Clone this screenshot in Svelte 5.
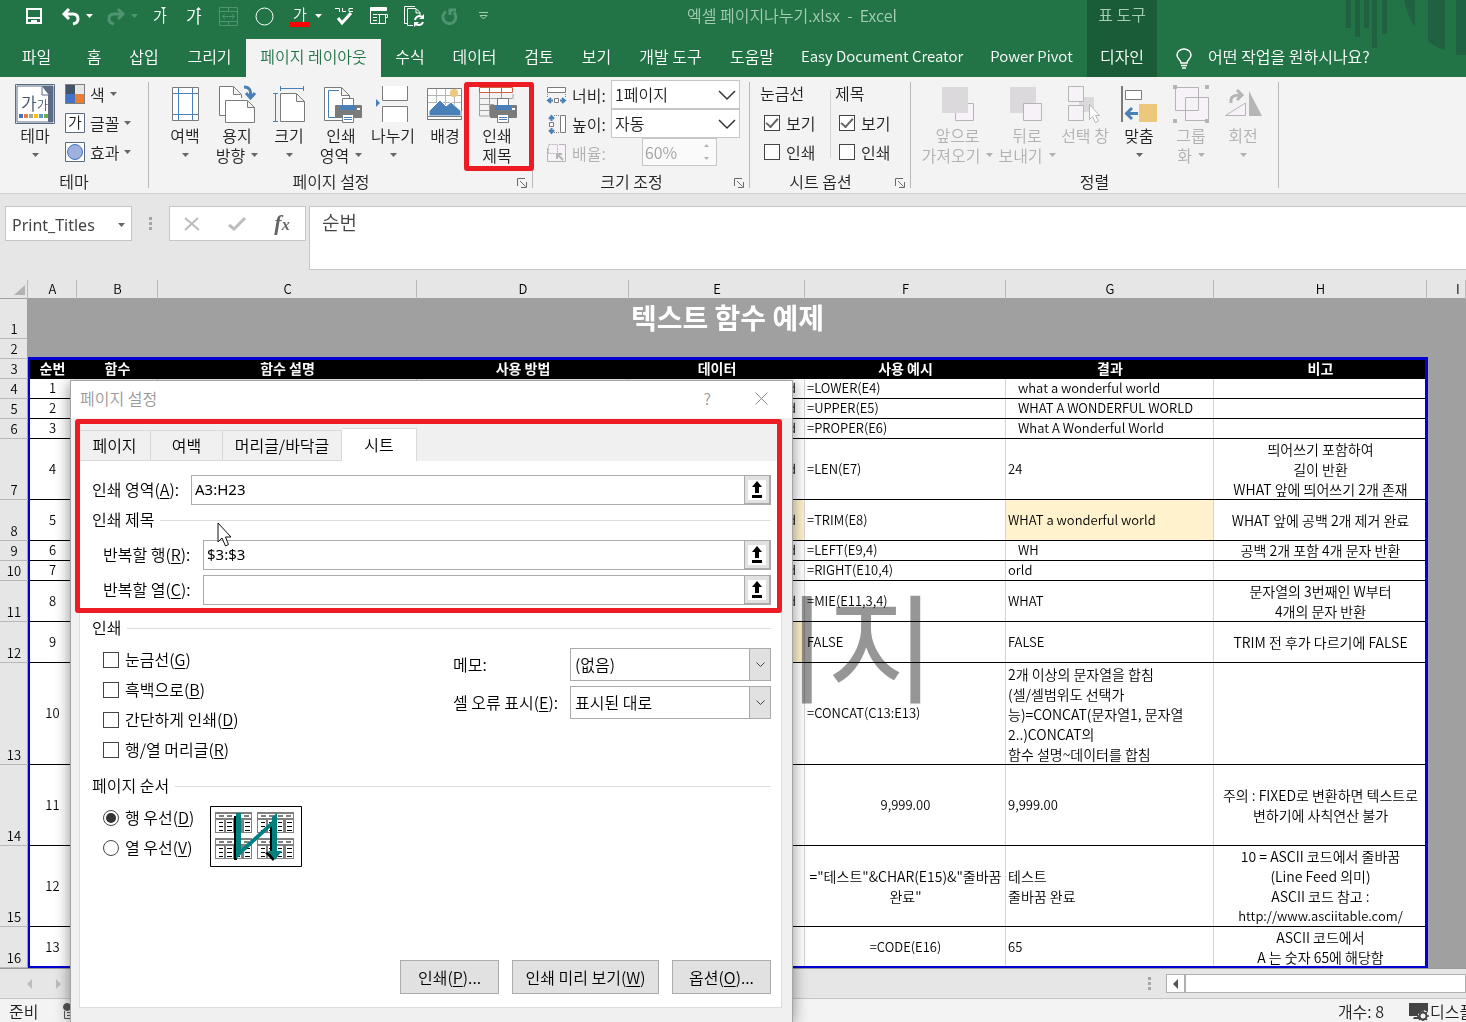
<script>
  const tabs = ['파일', '홈', '삽입', '그리기', '페이지 레이아웃', '수식', '데이터', '검토', '보기', '개발 도구', '도움말', 'Easy Document Creator', 'Power Pivot'];
  const setup = [
    { icon: 'margins', lines: ['여백'], menu: true },
    { icon: 'orient', lines: ['용지', '방향'], menu: true },
    { icon: 'size', lines: ['크기'], menu: true },
    { icon: 'area', lines: ['인쇄', '영역'], menu: true },
    { icon: 'breaks', lines: ['나누기'], menu: true },
    { icon: 'backdrop', lines: ['배경'] },
    { icon: 'titles', lines: ['인쇄', '제목'], marked: true },
  ];
  const arrange = [
    { icon: 'front', lines: ['앞으로', '가져오기'], menu: true, off: true },
    { icon: 'back', lines: ['뒤로', '보내기'], menu: true, off: true },
    { icon: 'pane', lines: ['선택 창'], off: true },
    { icon: 'align', lines: ['맞춤'], menu: true },
    { icon: 'group', lines: ['그룹', '화'], menu: true, off: true },
    { icon: 'rotate', lines: ['회전'], menu: true, off: true },
  ];
  const letters = ['A', 'B', 'C', 'D', 'E', 'F', 'G', 'H', 'I'];
  const heads = ['순번', '함수', '함수 설명', '사용 방법', '데이터', '사용 예시', '결과', '비고'];
  const w = 'what a wonderful world';
  const rows = [
    { r: 4, h: 20, n: 1, e: w, f: '=LOWER(E4)', g: 'what a wonderful world', pad: true, note: '' },
    { r: 5, h: 20, n: 2, e: w, f: '=UPPER(E5)', g: 'WHAT A WONDERFUL WORLD', pad: true, note: '' },
    { r: 6, h: 20, n: 3, e: w, f: '=PROPER(E6)', g: 'What A Wonderful World', pad: true, note: '' },
    { r: 7, h: 61, n: 4, e: w, f: '=LEN(E7)', g: '24', note: '띄어쓰기 포함하여\n길이 반환\nWHAT 앞에 띄어쓰기 2개 존재' },
    { r: 8, h: 41, n: 5, e: w, fillE: true, fillG: true, f: '=TRIM(E8)', g: 'WHAT a wonderful world', note: 'WHAT 앞에 공백 2개 제거 완료' },
    { r: 9, h: 20, n: 6, e: w, f: '=LEFT(E9,4)', g: 'WH', pad: true, note: '공백 2개 포함 4개 문자 반환' },
    { r: 10, h: 20, n: 7, e: w, f: '=RIGHT(E10,4)', g: 'orld', note: '' },
    { r: 11, h: 41, n: 8, e: w, f: '=MIE(E11,3,4)', g: 'WHAT', note: '문자열의 3번째인 W부터\n4개의 문자 반환' },
    { r: 12, h: 41, n: 9, e: '', fillE: true, f: 'FALSE', g: 'FALSE', note: 'TRIM 전 후가 다르기에 FALSE' },
    { r: 13, h: 102, n: 10, e: '', f: '=CONCAT(C13:E13)', g: '2개 이상의 문자열을 합침\n(셀/셀범위도 선택가\n능)=CONCAT(문자열1, 문자열\n2..)CONCAT의\n함수 설명~데이터를 합침', note: '' },
    { r: 14, h: 81, n: 11, e: '', f: '9,999.00', mid: true, g: '9,999.00', note: '주의 : FIXED로 변환하면 텍스트로\n변하기에 사칙연산 불가' },
    { r: 15, h: 81, n: 12, e: '', f: '="테스트"&CHAR(E15)&"줄바꿈\n완료"', mid: true, g: '테스트\n줄바꿈 완료', note: '10 = ASCII 코드에서 줄바꿈\n(Line Feed 의미)\nASCII 코드 참고 :\nhttp://www.asciitable.com/' },
    { r: 16, h: 41, n: 13, e: '', f: '=CODE(E16)', mid: true, g: '65', note: 'ASCII 코드에서\nA 는 숫자 65에 해당함' },
  ];
  const hangul = (s) => /[가-힣]/.test(s);
  const printOpts = [['눈금선', 'G'], ['흑백으로', 'B'], ['간단하게 인쇄', 'D'], ['행/열 머리글', 'R']];
  const orders = [['행 우선', 'D'], ['열 우선', 'V']];
  let order = $state('D');
  let area = $state('A3:H23');
  let repeatRows = $state('$3:$3');
  let repeatCols = $state('');
</script>

{#snippet caret()}
  <svg class="caret" width="7" height="4" viewBox="0 0 7 4" aria-hidden="true"><path d="M0 0h7L3.5 4z" fill="currentColor" /></svg>
{/snippet}

{#snippet launcher(label)}
  <button class="launcher" aria-label={label}>
    <svg width="10" height="10" viewBox="0 0 10 10" fill="none" stroke="#6a6a6a"><path d="M.5 8V.5H8M3 3l5.500 5.500M9.500 4v5.500H4" /></svg>
  </button>
{/snippet}

{#snippet cell(text)}
  {#each text.split('\n') as line}<div class="line" class:ko={hangul(line)}>{line}</div>{/each}
{/snippet}

{#snippet printer()}
  <path d="M19 22h25v11H19z" fill="#7b7b7b" stroke="#7b7b7b" stroke-linejoin="round" stroke-width="2" />
  <path d="M25.500 21.500v-7h11v7" fill="#fff" stroke="#7b7b7b" />
  <path d="M23 21h16v5H23z" fill="#4a80b8" stroke="none" />
  <path d="M40 24h3v2h-3z" fill="#fff" stroke="none" />
  <path d="M25.500 30.500h11v8h-11z" fill="#fff" stroke="#7b7b7b" />
  <path d="M27 33.500h8M27 35.500h8" stroke="#4a80b8" />
{/snippet}

{#snippet pic(name)}
  <svg width="44" height="40" viewBox="0 0 44 40" fill="none" stroke="#7b7b7b" aria-hidden="true">
    {#if name === 'theme'}
      <path d="M2.500.5h39v39h-39z" fill="#fff" stroke="#5c6b84" />
      <path d="M4 2h36v36H4z" fill="#fff" stroke="#5c6b84" />
      <path d="M29 2h11v36h-5V11z" fill="#5c6b84" stroke="none" />
      <path d="M29 3v8h7" fill="#fff" stroke="#5c6b84" />
      <text x="8" y="26" class="glyph big">가</text>
      <text x="24" y="26" class="glyph">가</text>
      <g stroke="none"><path d="M6 30h4v4H6z" fill="#4472c4" /><path d="M11 30h4v4h-4z" fill="#ed7d31" /><path d="M16 30h4v4h-4z" fill="#a5a5a5" /><path d="M21 30h4v4h-4z" fill="#ffc000" /><path d="M26 30h4v4h-4z" fill="#5b9bd5" /><path d="M31 30h4v4h-4z" fill="#70ad47" /></g>
    {:else if name === 'margins'}
      <path d="M9.500 3.500h26v33h-26z" fill="#fff" />
      <path d="M15.500 4v32M29.500 4v32M10 9.500h25M10 30.500h25" stroke="#4a80b8" />
    {:else if name === 'orient'}
      <path d="M10 31.500H4.500v-29h14l8 8V14M18.500 3v7.500h7" fill="#fff" />
      <path d="M10.500 16.500h22l7 7v15h-29zM32.500 17v6.500h7" fill="#fff" />
      <path d="M29 3c6 0 7 4 6.500 9M31 9l4.500 5 4.500-5" stroke="#4a80b8" stroke-width="3" />
    {:else if name === 'size'}
      <path d="M13.500 9.500h16l8 8v20h-24zM29.500 10v7.500h8" fill="#fff" />
      <path d="M13.500 2v5M36.500 2v5M13.500 4.500h23M6 9.500h5M6 37.500h5M8.500 9.500v28" stroke="#4a80b8" />
    {:else if name === 'area'}
      <path d="M5.500 3.500h17l8 8v25h-25zM22.500 4v7.500h8" fill="#fff" />
      <path d="M20 6.500H9.500v27H18" stroke="#4a80b8" />
      <g transform="translate(-2)">{@render printer()}</g>
    {:else if name === 'breaks'}
      <path d="M11.500 2v14.500h25V2M11.500 38V22.500h25V38" fill="#fff" />
      <path d="M5 15l4 4-4 4z" fill="#4a80b8" stroke="none" />
    {:else if name === 'backdrop'}
      <path d="M4.500 4.500h34v31h-34z" fill="#fff" /><path d="M13.500 5v28M22.500 5v28M31.500 5v28M5 11.500h33M5 18.500h33" stroke="#b5b5b5" />
      <circle cx="31" cy="9" r="4" fill="#edc77b" stroke="none" />
      <path d="M6 32V27l11-11 6 6 5-4 10 9v5z" fill="#4a80b8" stroke="#fff" />
      <path d="M4.500 32.500h34v3h-34z" fill="#fff" />
    {:else if name === 'titles'}
      <path d="M4.500 4v28H18M38 10v5M14.500 4v28M26.500 4v12M5 14.500h32M5 20.500h14M5 26.500h14" fill="none" stroke="#a0a0a0" />
      <path d="M4.500 3.500h33v5h-33zM14.500 4v5M26.500 4v5" stroke="#d0613c" fill="#fff" />
      <g transform="translate(-3)">{@render printer()}</g>
    {:else if name === 'front'}
      <path d="M19.500 19.500h18v17h-18z" fill="#f6f2f8" stroke="#b5b5b5" /><path d="M6 3h26v26H6z" fill="#dcd9dc" stroke="none" />
    {:else if name === 'back'}
      <path d="M5 3h26v26H5z" fill="#dcd9dc" stroke="none" /><path d="M18.500 19.500h18v17h-18z" fill="#f6f2f8" stroke="#b5b5b5" />
    {:else if name === 'pane'}
      <path d="M16 13h15v15H16z" fill="#dcd9dc" stroke="none" /><path d="M5.500 2.500h15v15h-15zM5.500 21.500h15v15h-15z" fill="#f6f2f8" stroke="#b5b5b5" />
      <path d="M26.500 20.500v15l3-3 3 6 3-1.500-3-5.500h4z" fill="#fff" stroke="#b5b5b5" />
    {:else if name === 'align'}
      <path d="M5 2v36" stroke-width="2" /><path d="M8.500 6.500h16v9h-16z" fill="#fff" />
      <path d="M22 20h18v18H22z" fill="#edc77b" stroke="none" /><path d="M21 29.500H10M15 24l-5.500 5.500L15 35" stroke="#4a80b8" stroke-width="3" />
    {:else if name === 'group'}
      <path d="M6.500 3.500h23v23h-23z" fill="#f6f2f8" stroke="#b5b5b5" /><path d="M16.500 13.500h23v23h-23z" fill="#f6f2f8" stroke="#b5b5b5" /><path d="M16.500 26.500h13v-13" stroke="#b5b5b5" />
      <path d="M4 1h4v4H4zM36 1h4v4h-4zM4 35h4v4H4zM36 35h4v4h-4z" fill="#b5b5b5" stroke="none" />
    {:else}
      <path d="M4.500 31.500h20V19z" fill="#f6f2f8" stroke="#b5b5b5" /><path d="M28 7v25h13z" fill="#b5b5b5" stroke="none" />
      <path d="M10 19v-3c0-4 4-5 9-5M16 6l5 5-5 5" stroke="#b5b5b5" stroke-width="3" />
    {/if}
  </svg>
{/snippet}

{#snippet big(b)}
  <button class="big" class:marked={b.marked} disabled={b.off}>
    {@render pic(b.icon)}
    <span>{b.lines[0]}</span>
    <span class="second">{b.lines[1] ?? ''}{#if b.menu}{@render caret()}{/if}</span>
  </button>
{/snippet}

{#snippet pickButton(label)}
  <button class="pick" aria-label={label}>
    <svg width="18" height="20" viewBox="0 0 18 20"><path d="M0 0h18v20H0z" fill="#fff" /><path d="M9 1l5 6h-3v6H7V7H4zM4 15h10v3H4z" /></svg>
  </button>
{/snippet}

<div class="window">
  <header>
    <svg class="decor" width="120" height="60" viewBox="0 0 120 60" fill="#206141" aria-hidden="true"><path d="M0 0h5v28H0zM9 0h5v37H9zM18 0h5v28h-5zM26 0h5v48h-5zM36 0h5v34h-5zM58 0h11v27Q62 18 58 0zM82 0h17v50q-9-2-17-9zM110 0h10v55h-10z" /></svg>
    <div class="titlebar">
      <div class="quick">
        <button aria-label="저장"><svg width="16" height="16" viewBox="0 0 16 16" fill="none" stroke="#fff" stroke-width="2"><path d="M1 1h14v14H1zM2 10h12" /><path d="M5 16v-4h6v4zM6 13h2v2H6z" fill="#fff" stroke="none" /></svg></button>
        <button aria-label="실행 취소"><svg width="20" height="17" viewBox="0 0 20 17" fill="none" stroke="#fff" stroke-width="3"><path d="M8 1L3 6l5 5M3 6h9q5 0 5 5 0 4-5 5" /></svg>{@render caret()}</button>
        <button class="dim" aria-label="다시 실행"><svg width="20" height="17" viewBox="0 0 20 17" fill="none" stroke="currentColor" stroke-width="3"><path d="M12 1l5 5-5 5M17 6H8q-5 0-5 5 0 4 5 5" /></svg>{@render caret()}</button>
        <button aria-label="글꼴 작게"><svg width="14" height="20" viewBox="0 0 14 20"><text x="0" y="16" class="ga s">가</text><path d="M8 1h5l-2.500 3z" fill="#fff" /></svg></button>
        <button aria-label="글꼴 크게"><svg width="16" height="22" viewBox="0 0 16 22"><text x="0" y="18" class="ga">가</text><path d="M10 5h5l-2.500-3z" fill="#fff" /></svg></button>
        <button class="dim" aria-label="병합"><svg width="19" height="19" viewBox="0 0 19 19" fill="none" stroke="currentColor"><path d="M.5.5h18v18H.5zM.5 4.500h18M.5 14.500h18M9.500 1v4M9.500 15v4M4 9.500h11M6 7L3.500 9.500 6 12M13 7l2.500 2.500L13 12" /></svg></button>
        <button aria-label="타원"><svg width="19" height="19" viewBox="0 0 19 19" fill="none" stroke="#fff"><circle cx="9.500" cy="9.500" r="8.500" /></svg></button>
        <button aria-label="글꼴 색"><svg width="20" height="24" viewBox="0 0 20 24"><text x="3" y="16" class="ga s">가</text><path d="M0 18h20v5H0z" fill="#f00" /></svg>{@render caret()}</button>
        <button aria-label="맞춤법"><svg width="18" height="19" viewBox="0 0 18 19" fill="none" stroke="#fff"><path d="M0 1.500h4.500V5M7.500 1v3.500H11M18 1.500h-4v3h4" /><path d="M3 11l4 5 9-10" stroke-width="3" /></svg></button>
        <button aria-label="양식"><svg width="18" height="18" viewBox="0 0 18 18" fill="none" stroke="#fff"><path d="M.5.500h16v3H.5z" fill="#fff" /><path d="M.5 1v15.500H7M3 7.500h4M3 10.500h4M3 13.500h4M9.500 16.500v-9h8v3h-2M9.500 7.500h-2M15.500 8v8.500h-8" /></svg></button>
        <button aria-label="새로 고침"><svg width="21" height="21" viewBox="0 0 21 21" fill="none" stroke="#fff"><path d="M3 17.500H.5V.500H11M9 19.500H3.500v-17H12l4 4V9M12 3v4h4" /><path d="M11 14q1-4 5-4 2 0 3 2M19 16q-1 3-4 3-3 0-4-2" stroke-width="2" /><path d="M20 8v5h-5zM10 21v-5h5z" fill="#fff" stroke="none" /></svg></button>
        <button class="dim" aria-label="반복"><svg width="17" height="17" viewBox="0 0 17 17" fill="none" stroke="currentColor" stroke-width="3"><path d="M5 3.500a6.500 6.500 0 1 0 8 1M9 7V2h6" /></svg></button>
        <button aria-label="도구 모음 사용자 지정"><svg width="9" height="8" viewBox="0 0 9 8" fill="none" stroke="#a5cdb5"><path d="M0 .500h9M1 3.500h7l-3.500 3.500z" /></svg></button>
      </div>
      <div class="doc">엑셀 페이지나누기.xlsx&nbsp; -&nbsp; Excel</div>
      <div class="context">표 도구</div>
    </div>
    <nav class="tabs">
      {#each tabs as t, i}<button class:active={i === 4} class:latin={!hangul(t)}>{t}</button>{/each}
      <button class="design">디자인</button>
      <label class="tell">
        <svg width="16" height="21" viewBox="0 0 16 21" fill="none" stroke="#fff" stroke-width="1.500"><path d="M5 15c0-3-4-4-4-8a7 6 0 0 1 14 0c0 4-4 5-4 8zM5 17.500h6M6 20h4" /></svg>
        <input placeholder="어떤 작업을 원하시나요?" aria-label="어떤 작업을 원하시나요?" />
      </label>
    </nav>
  </header>

  <section class="ribbon">
    <div class="cluster g1">
      <div class="tools">
        {@render big({ icon: 'theme', lines: ['테마'], menu: true })}
        <div class="stack">
          <button><svg width="20" height="20" viewBox="0 0 20 20"><path d="M0 0h20v20H0z" fill="#808080" /><path d="M1 1h9v9H1z" fill="#44546a" /><path d="M10 1h9v9h-9z" fill="#e7e6e6" /><path d="M1 10h9v9H1z" fill="#4472c4" /><path d="M10 10h9v9h-9z" fill="#ed7d31" /></svg>색{@render caret()}</button>
          <button><svg width="20" height="20" viewBox="0 0 20 20"><path d="M.5.500h19v19H.5z" fill="#fff" stroke="#5c6b84" /><text x="3" y="15" class="fontga">가</text></svg>글꼴{@render caret()}</button>
          <button><svg width="20" height="20" viewBox="0 0 20 20"><path d="M.5.500h19v19H.5z" fill="#fff" stroke="#5c6b84" /><circle cx="10" cy="10" r="7.500" fill="#9db0de" stroke="#4472c4" /></svg>효과{@render caret()}</button>
        </div>
      </div>
      <div class="caption"><span>테마</span></div>
    </div>
    <div class="cluster g2">
      <div class="tools">{#each setup as b}{@render big(b)}{/each}</div>
      <div class="caption"><span>페이지 설정</span>{@render launcher('페이지 설정')}</div>
    </div>
    <div class="cluster g3">
      <div class="fit">
        <label for="fitw"><svg width="20" height="20" viewBox="0 0 20 20" fill="none" stroke="#7b7b7b"><path d="M.5 2.500h18v5H.5z" fill="#fff" /><path d="M.5 9v4M18.500 9v4" stroke-dasharray="1 1" /><path d="M7.500 13.500h4v4h-4z" fill="#fff" /><path d="M6 15.500H1M4 13l-3 2.500L4 18M13 15.500h5M15 13l3 2.500-3 2.500" stroke="#4a80b8" stroke-width="2" /></svg>너비:</label>
        <span class="drop"><select id="fitw"><option>1페이지</option></select><svg width="18" height="10" viewBox="0 0 18 10" fill="none" stroke="#333" stroke-width="1.500"><path d="M1 1l8 8 8-8" /></svg></span>
        <label for="fith"><svg width="20" height="20" viewBox="0 0 20 20" fill="none" stroke="#7b7b7b"><path d="M13.500 1.500h5v17h-5z" fill="#fff" /><path d="M7 1.500h5M7 18.500h5" stroke-dasharray="1 1" /><path d="M2.500 8.500h4v4h-4z" fill="#fff" /><path d="M4.500 7V2M2 5l2.500-3L7 5M4.500 14v5M2 16l2.500 3L7 16" stroke="#4a80b8" stroke-width="2" /></svg>높이:</label>
        <span class="drop"><select id="fith"><option>자동</option></select><svg width="18" height="10" viewBox="0 0 18 10" fill="none" stroke="#333" stroke-width="1.500"><path d="M1 1l8 8 8-8" /></svg></span>
        <label for="scale" class="off"><svg width="20" height="20" viewBox="0 0 20 20" fill="none" stroke="#b5b5b5"><path d="M.5 5v13.500h18V1.500H12" fill="#f6f2f8" /><path d="M1.500 1.500h9v9h-9z" stroke-dasharray="2 1" fill="#f6f2f8" /><path d="M16 17l-5-5M10 16v-5h5" stroke-width="2" /></svg>배율:</label>
        <span class="spin"><input id="scale" value="60%" disabled /><svg width="5" height="16" viewBox="0 0 5 16" fill="#b5b5b5"><path d="M0 3l2.500-3L5 3zM0 13h5l-2.500 3z" /></svg></span>
      </div>
      <div class="caption"><span>크기 조정</span>{@render launcher('크기 조정')}</div>
    </div>
    <div class="cluster g4">
      <div class="options">
        {#each ['눈금선', '제목'] as t}
          <div class="optcol">
            <span>{t}</span>
            <label><input type="checkbox" checked />보기</label>
            <label><input type="checkbox" />인쇄</label>
          </div>
        {/each}
      </div>
      <div class="caption"><span>시트 옵션</span>{@render launcher('시트 옵션')}</div>
    </div>
    <div class="cluster g5">
      <div class="tools">{#each arrange as b}{@render big(b)}{/each}</div>
      <div class="caption"><span>정렬</span></div>
    </div>
  </section>

  <section class="formula">
    <button class="namebox">Print_Titles{@render caret()}</button>
    <svg class="dots" width="3" height="14" viewBox="0 0 3 14" fill="#a5a5a5"><path d="M0 0h3v3H0zM0 5h3v3H0zM0 10h3v3H0z" /></svg>
    <div class="fx">
      <button aria-label="취소"><svg width="16" height="14" viewBox="0 0 16 14" fill="none" stroke="#bcbcbc" stroke-width="2"><path d="M1 1l14 12M14 1L1 13" /></svg></button>
      <button aria-label="입력"><svg width="18" height="14" viewBox="0 0 18 14" fill="none" stroke="#bcbcbc" stroke-width="3"><path d="M1 8l5 4L17 1" /></svg></button>
      <button class="fn" aria-label="함수 삽입"><i>f<small>x</small></i></button>
    </div>
    <textarea aria-label="수식 입력줄">순번</textarea>
  </section>

  <section class="sheet">
    <table>
      <colgroup><col class="c0" /><col class="ca" /><col class="cb" /><col class="cc" /><col class="cd" /><col class="ce" /><col class="cf" /><col class="cg" /><col class="ch" /><col /></colgroup>
      <thead>
        <tr>
          <th class="corner"><svg width="11" height="11" viewBox="0 0 11 11"><path d="M11 0v10H0z" fill="#b2b2b2" /></svg></th>
          {#each letters as l}<th class:last={l === 'I'}>{l}</th>{/each}
        </tr>
      </thead>
      <tbody>
        <tr class="r1"><th>1</th><td colspan="8" class="title">텍스트 함수 예제</td><td class="out"></td></tr>
        <tr class="r2"><th>2</th><td colspan="9" class="out"></td></tr>
        <tr class="r3"><th>3</th>{#each heads as h}<td>{h}</td>{/each}<td class="out"></td></tr>
        {#each rows as row}
          <tr style:height="{row.h}px">
            <th>{row.r}</th>
            <td>{row.n}</td><td></td><td></td><td></td>
            <td class="data" class:fill={row.fillE}>{row.e}</td>
            <td class:left={!row.mid}>{@render cell(row.f)}</td>
            <td class="left" class:fill={row.fillG} class:pad={row.pad}>{@render cell(row.g)}</td>
            <td>{@render cell(row.note)}</td>
            <td class="out"></td>
          </tr>
        {/each}
      </tbody>
    </table>
    <div class="watermark" aria-hidden="true">페이지</div>
    <div class="printarea"></div>
  </section>

  <div class="sheetbar">
    <svg class="arrows" width="36" height="10" viewBox="0 0 36 10" fill="#bdbdbd"><path d="M5 0v10L0 5zM29 0v10l5-5z" /></svg>
    <svg width="3" height="14" viewBox="0 0 3 14" fill="#a5a5a5"><path d="M0 0h3v3H0zM0 5h3v3H0zM0 10h3v3H0z" /></svg>
    <div class="scroll"><button aria-label="왼쪽으로"><svg width="5" height="10" viewBox="0 0 5 10" fill="#555"><path d="M5 0v10L0 5z" /></svg></button></div>
  </div>

  <footer>
    <span>준비</span>
    <svg width="12" height="16" viewBox="0 0 12 16" fill="none" stroke="#555"><circle cx="4" cy="4" r="3.500" fill="#555" /><path d="M1.500 8v7.500H11V5M4 9.500h5M4 12.500h5" /></svg>
    <span class="count">개수: 8</span>
    <svg width="20" height="19" viewBox="0 0 20 19"><path d="M0 1h19v9l-4-2-6 4v2H0zM5 15h5v2H4z" fill="#444" /><circle cx="14" cy="14" r="3.500" fill="none" stroke="#444" stroke-width="2" /><path d="M14 8v3M14 17v2M8 14h3M17 14h3M10 10l2 2M16 16l2 2M18 10l-2 2M10 18l2-2" stroke="#444" stroke-width="1.500" /></svg>
    <span class="display">디스플레이 설정</span>
  </footer>

  <div class="dialog" role="dialog" aria-label="페이지 설정">
    <div class="dtitle">
      <span>페이지 설정</span>
      <button aria-label="도움말">?</button>
      <button aria-label="닫기"><svg width="13" height="13" viewBox="0 0 13 13" fill="none" stroke="#888"><path d="M.5.500l12 12M12.500.500l-12 12" /></svg></button>
    </div>
    <div class="dbody">
      <div class="dtabs"><button>페이지</button><button>여백</button><button>머리글/바닥글</button><button class="on">시트</button></div>
      <div class="panel">
        <div class="field first"><label for="area">인쇄 영역(<u>A</u>):</label><span class="ref"><input id="area" bind:value={area} />{@render pickButton('인쇄 영역 선택')}</span></div>
        <div class="legend">인쇄 제목</div>
        <div class="field inner"><label for="rr">반복할 행(<u>R</u>):</label><span class="ref"><input id="rr" bind:value={repeatRows} />{@render pickButton('반복할 행 선택')}</span></div>
        <div class="field inner"><label for="rc">반복할 열(<u>C</u>):</label><span class="ref"><input id="rc" bind:value={repeatCols} />{@render pickButton('반복할 열 선택')}</span></div>
        <div class="legend print">인쇄</div>
        <div class="split">
          <div class="checks">
            {#each printOpts as [t, k]}<label><input type="checkbox" /><span>{t}(<u>{k}</u>)</span></label>{/each}
          </div>
          <div class="combos">
            <label for="memo">메모:</label>
            <span class="combo"><select id="memo"><option>(없음)</option></select><span class="btn"><svg width="9" height="6" viewBox="0 0 9 6" fill="none" stroke="#444"><path d="M.5.500l4 4 4-4" /></svg></span></span>
            <label for="errs">셀 오류 표시(<u>E</u>):</label>
            <span class="combo"><select id="errs"><option>표시된 대로</option></select><span class="btn"><svg width="9" height="6" viewBox="0 0 9 6" fill="none" stroke="#444"><path d="M.5.500l4 4 4-4" /></svg></span></span>
          </div>
        </div>
        <div class="legend order">페이지 순서</div>
        <div class="orders">
          <div class="checks">
            {#each orders as [t, k]}<label><input type="radio" name="order" value={k} bind:group={order} /><span>{t}(<u>{k}</u>)</span></label>{/each}
          </div>
          <svg width="92" height="61" viewBox="0 0 92 61" aria-hidden="true">
            <path d="M.5.500h91v60H.5z" fill="#fff" stroke="#000" />
            {#each [[5, 6], [47, 6], [5, 32], [47, 32]] as [x, y]}
              <g transform="translate({x} {y})">
                <path d="M0 0h37v21H0z" fill="#808080" />
                <path d="M1 2h35v4H1zM1 8h8v12H1zM11 8h7v12h-7zM20 8h6v12h-6zM29 8h7v12h-7z" fill="#fff" />
                <path d="M4 4h5M12 4h5M21 4h5M29 4h5M4 10.500h4M12 10.500h5M21 10.500h4M30 10.500h5M4 14.500h4M12 14.500h5M21 14.500h4M30 14.500h5M4 18.500h4M12 18.500h5M21 18.500h4M30 18.500h5" stroke="#000" />
              </g>
            {/each}
            <path d="M24 10h3v44h-3zM60 20h3v32h-3zM55 47l3-1 7 6-2 3z" />
            <path d="M26 7h5v36L62 15l0-4 5-4v38h5l-7 9-7-9h4V20L26 53z" fill="#008080" />
          </svg>
        </div>
        <div class="actions"><button>인쇄(<u>P</u>)...</button><button class="wide">인쇄 미리 보기(<u>W</u>)</button><button>옵션(<u>O</u>)...</button></div>
      </div>
    </div>
    <div class="highlight"></div>
    <svg class="pointer" width="16" height="25" viewBox="0 0 16 25" aria-hidden="true"><path d="M1 1v19l4-4 3.500 8 3-1.500L8.500 15H14z" fill="#fff" stroke="#111" /></svg>
  </div>
</div>

<style>
  :global(body) { margin: 0; }
  .window, .window :global(*), .window :global(*::before), .window :global(*::after) { box-sizing: border-box; }
  .window { position: relative; height: 100vh; overflow: hidden; display: flex; flex-direction: column; font: 350 16px/20px "Noto Sans CJK KR", "Noto Sans", sans-serif; color: #222; background: #e6e6e6; }
  button, input, select, textarea { font: inherit; color: inherit; background: none; border: 0; padding: 0; margin: 0; border-radius: 0; outline: 0; }
  svg { flex: none; display: block; overflow: visible; }

  header { position: relative; background: #227447; color: #fff; flex: none; }
  .decor { position: absolute; right: 0; top: 0; }
  .titlebar { position: relative; display: grid; grid-template-columns: 497px 590px 70px 1fr; height: 39px; }
  .quick { display: grid; grid-template-columns: 36px 49px 41px 36px 32px 37px 34px 50px 26px 43px 29px 41px 27px; height: 32px; padding-left: 16px; }
  .quick button { display: flex; align-items: center; justify-content: center; gap: 5px; }
  .quick .dim { color: #4f9470; }
  .ga { font-size: 17px; fill: #fff; }
  .ga.s { font-size: 15px; }
  .doc { line-height: 30px; text-align: center; color: #a5cdb5; white-space: nowrap; }
  .context { background: #1b5c38; color: #a5cdb5; text-align: center; line-height: 28px; }
  .tabs { position: relative; display: grid; grid-template-columns: 73px 42px 58px 73px 135px 58px 71px 58px 57px 91px 72px 188px 111px 70px 1fr; height: 38px; }
  .tabs button { white-space: nowrap; padding-bottom: 4px; }
  .tabs .latin { font-size: 15px; }
  .tabs .active { background: #f3f3f3; color: #227447; }
  .tabs .design { background: #1b5c38; }
  .tell { display: flex; align-items: center; gap: 16px; padding-left: 19px; }
  .tell input { flex: 1; min-width: 0; padding-bottom: 4px; }
  .tell input::placeholder { color: #fff; opacity: 1; }

  .ribbon { display: flex; height: 117px; flex: none; background: #f3f3f3; border-bottom: 1px solid #d2d2d2; padding: 5px 0; }
  .cluster { display: flex; flex-direction: column; border-right: 1px solid #b8b8b8; flex: none; }
  .g1 { width: 149px; }
  .g2 { width: 384px; }
  .g3 { width: 217px; }
  .g4 { width: 161px; }
  .g5 { width: 368px; }
  .tools { display: flex; flex: 1; }
  .g1 .tools { padding-left: 9px; }
  .g2 .tools { padding-left: 10px; }
  .g5 .tools { padding-left: 7px; }
  .big { position: relative; width: 52px; display: flex; flex-direction: column; align-items: center; padding-top: 2px; white-space: nowrap; }
  .big svg:first-child { margin-bottom: 1px; }
  .g5 .big:nth-child(1) { width: 79px; }
  .g5 .big:nth-child(2) { width: 60px; }
  .g5 .big:nth-child(3) { width: 56px; }
  .big:disabled { color: #b1b1b1; }
  .second { display: flex; align-items: center; gap: 6px; height: 20px; }
  .caret { color: #666; }
  .quick .caret, .big:disabled .caret { color: inherit; }
  .marked::after { content: ""; position: absolute; inset: 0 -11px auto -7px; height: 89px; border: 5px solid #ed1c24; border-radius: 3px; }
  .glyph { font-size: 12px; fill: #44546a; stroke: none; }
  .glyph.big { font-size: 17px; }
  .fontga { font-size: 15px; fill: #222; }
  .stack { display: flex; flex-direction: column; padding-left: 4px; }
  .stack button { display: flex; align-items: center; gap: 5px; height: 29px; padding-bottom: 5px; }
  .caption { display: flex; height: 14px; align-items: center; line-height: 14px; }
  .caption span { flex: 1; text-align: center; }
  .launcher { width: 19px; padding: 4px 0 0 4px; }
  .fit { display: grid; grid-template-columns: 64px 129px; grid-auto-rows: 29px; padding-left: 14px; flex: 1; margin-top: -2px; }
  .fit label { display: flex; align-items: center; gap: 5px; white-space: nowrap; }
  .fit .off { color: #b1b1b1; }
  .drop { display: grid; align-items: center; border: 1px solid #c6c6c6; background: #fff; height: 29px; }
  .drop select, .drop svg { grid-area: 1 / 1; }
  .drop select { appearance: none; padding: 0 0 2px 3px; }
  .drop svg { justify-self: end; margin-right: 3px; pointer-events: none; }
  .spin { display: flex; align-items: center; width: 75px; height: 28px; margin-left: 31px; border: 1px solid #c6c6c6; background: #fafafa; color: #a0a0a0; padding: 0 7px 0 2px; }
  .spin input { flex: 1; min-width: 0; }
  .options { display: flex; flex: 1; padding-left: 10px; }
  .optcol { display: flex; flex-direction: column; width: 76px; }
  .optcol:first-child { background: linear-gradient(#d2d2d2, #d2d2d2) 70px 8px / 1px 68px no-repeat; }
  .optcol span { height: 26px; line-height: 22px; }
  .optcol label { display: flex; align-items: center; gap: 6px; height: 29px; padding-left: 4px; }
  input[type="checkbox"], input[type="radio"] { appearance: none; flex: none; width: 16px; height: 16px; border: 1px solid #444; background: #fff; display: grid; place-items: center; }
  input[type="checkbox"]:checked::before { content: ""; width: 12px; height: 7px; border: solid #666; border-width: 0 0 2px 2px; transform: translateY(-1px) rotate(-48deg); }
  input[type="radio"] { border-radius: 50%; }
  input[type="radio"]:checked::before { content: ""; width: 10px; height: 10px; border-radius: 50%; background: #333; }

  .formula { display: flex; align-items: flex-start; flex: none; height: 86px; padding: 12px 0 10px 5px; }
  .namebox { display: flex; align-items: center; justify-content: space-between; width: 127px; height: 35px; padding: 2px 6px 0; border: 1px solid #c6c6c6; background: #fff; color: #444; font-family: "Noto Sans", sans-serif; font-weight: 400; }
  .dots { margin: 11px 17px 0; }
  .fx { display: grid; grid-template-columns: 44px 46px 44px; width: 137px; height: 35px; border: 1px solid #c6c6c6; background: #fff; }
  .fx button { display: grid; place-items: center; }
  .fn { font: bold 22px/24px "Liberation Serif", serif; color: #666; }
  .fn small { font-size: 16px; }
  .formula textarea { flex: 1; height: 64px; margin-left: 3px; border: 1px solid #c6c6c6; border-right: 0; background: #fff; padding: 3px 12px; font-size: 19px; line-height: 24px; color: #444; resize: none; }

  .sheet { position: relative; flex: 1; overflow: hidden; background: #a0a0a0; border-bottom: 1px solid #999; color: #000; font-size: 13px; }
  table { table-layout: fixed; width: 100%; min-width: 1466px; border-collapse: separate; border-spacing: 0; }
  .c0 { width: 28px; } .ca { width: 49px; } .cb { width: 81px; } .cc { width: 259px; } .cd { width: 212px; } .ce { width: 176px; } .cf { width: 201px; } .cg { width: 208px; } .ch { width: 213px; }
  th, td { padding: 0; text-align: center; white-space: pre; line-height: 18px; font-weight: 350; overflow: hidden; }
  th { background: #e6e6e6; }
  thead tr { height: 19px; }
  thead th { line-height: 16px; padding-bottom: 2px; box-shadow: inset -1px 0 #b8b8b8, inset 0 -1px #a0a0a0; }
  thead .last { text-align: left; padding-left: 29px; }
  .corner svg { margin: 4px 0 0 14px; }
  tbody th { vertical-align: bottom; padding-bottom: 1px; box-shadow: inset -1px 0 #a0a0a0, inset 0 -1px #b8b8b8; }
  tbody td { background: #fff; padding-bottom: 2px; box-shadow: inset 0 -1px #000, inset -1px 0 #d4d4d4; }
  .line:not(:only-child) { line-height: 20px; }
  td:has(.line + .line) { padding-bottom: 1px; }
  .ko { font-size: 14px; }
  td.left { text-align: left; padding-left: 2px; }
  td.left.pad { padding-left: 12px; }
  td.data { text-align: right; padding-right: 9px; }
  td.fill { background: #fff2cc; }
  tbody td.out, tbody td.title { background: #a0a0a0; box-shadow: none; }
  .r1 { height: 40px; }
  .r2, .r3 { height: 20px; }
  td.title { color: #fff; font-size: 28px; font-weight: 700; line-height: 34px; padding-bottom: 4px; }
  .r3 td { background: #000; color: #fff; font-weight: 700; box-shadow: none; font-size: 14px; }
  .watermark { position: absolute; left: 610px; top: 280px; font-size: 118px; line-height: 166px; font-weight: 400; color: #969696; mix-blend-mode: multiply; pointer-events: none; white-space: nowrap; }
  .printarea { position: absolute; left: 28px; top: 77px; width: 1400px; height: 612px; border: 3px solid #0000d0; border-left-width: 2px; pointer-events: none; }

  .sheetbar { display: flex; align-items: center; flex: none; height: 29px; padding-left: 27px; }
  .arrows { margin-right: auto; }
  .scroll { width: 300px; height: 19px; margin-left: 15px; border: 1px solid #b0b0b0; background: #fff; }
  .scroll button { display: grid; place-items: center; width: 19px; height: 17px; border-right: 2px solid #b0b0b0; }
  footer { display: flex; align-items: center; flex: none; height: 24px; padding: 1px 0 0 9px; background: #f3f3f3; border-top: 1px solid #c6c6c6; white-space: nowrap; }
  footer span + svg { margin-left: 25px; }
  .count { margin-left: auto; }
  .display { width: 36px; overflow: hidden; margin-left: 1px; }

  .dialog { position: absolute; left: 70px; top: 380px; bottom: 0; width: 723px; display: flex; flex-direction: column; border: 1px solid #a5a5a5; border-bottom: 0; background: #f0f0f0; color: #000; box-shadow: 0 2px 14px rgba(0, 0, 0, .45); }
  .dtitle { display: flex; align-items: center; height: 37px; padding: 0 24px 3px 9px; background: #fff; color: #999; }
  .dtitle span { flex: 1; }
  .dtitle button { margin-left: 44px; }
  .dbody { flex: 1; display: flex; flex-direction: column; padding: 10px 10px 14px 8px; }
  .dtabs { display: flex; align-items: flex-end; height: 33px; }
  .dtabs button { height: 31px; padding-bottom: 2px; border: 1px solid #d9d9d9; border-left: 0; width: 72px; }
  .dtabs button:nth-child(3) { width: 119px; }
  .dtabs .on { width: 75px; height: 33px; background: #fff; border-bottom: 0; }
  .panel { flex: 1; display: flex; flex-direction: column; padding: 14px 10px 13px 12px; background: #fff; border: 1px solid #dcdcdc; border-top: 0; }
  .field { display: grid; grid-template-columns: 99px 1fr; align-items: center; height: 30px; }
  .field.inner { grid-template-columns: 100px 1fr; padding-left: 11px; margin-top: 5px; }
  .field label, .combos label, .checks span { padding-bottom: 2px; }
  .ref { display: flex; height: 30px; border: 1px solid #ababab; }
  .ref input { flex: 1; min-width: 0; padding: 0 3px 3px; font: 15px/20px "Noto Sans", sans-serif; }
  .pick { display: grid; place-items: center; width: 26px; border: 1px solid #ababab; border-width: 0 1px 1px 1px; background: #e1e1e1; }
  .legend { display: flex; align-items: center; gap: 6px; height: 30px; padding-bottom: 2px; }
  .legend::after { content: ""; flex: 1; height: 1px; background: #dcdcdc; margin-top: 2px; }
  .legend.print { margin-top: 8px; }
  .legend.order { margin-top: 6px; }
  .split { display: flex; justify-content: space-between; margin-top: 2px; }
  .checks { padding-left: 11px; }
  .checks label { display: flex; align-items: center; gap: 6px; height: 30px; }
  .combos { display: grid; grid-template-columns: 117px 201px; grid-auto-rows: 33px; row-gap: 5px; padding-top: 3px; align-items: center; }
  .combo { display: grid; height: 33px; border: 1px solid #ababab; }
  .combo select, .combo .btn { grid-area: 1 / 1; }
  .combo select { appearance: none; padding: 0 0 2px 4px; }
  .combo .btn { justify-self: end; display: grid; place-items: center; width: 21px; background: #e1e1e1; border-left: 1px solid #ababab; pointer-events: none; }
  .orders { display: flex; align-items: flex-start; gap: 16px; margin-top: 2px; }
  .orders svg { margin-top: 3px; }
  .actions { display: flex; justify-content: flex-end; gap: 13px; margin-top: auto; }
  .actions button { width: 99px; height: 34px; border: 1px solid #adadad; background: #e1e1e1; }
  .actions .wide { width: 147px; }
  u { text-underline-offset: 2px; }
  .highlight { position: absolute; left: 4px; top: 38px; width: 707px; height: 194px; border: 5px solid #ed1c24; border-radius: 3px; pointer-events: none; }
  .pointer { position: absolute; left: 146px; top: 141px; }
</style>
